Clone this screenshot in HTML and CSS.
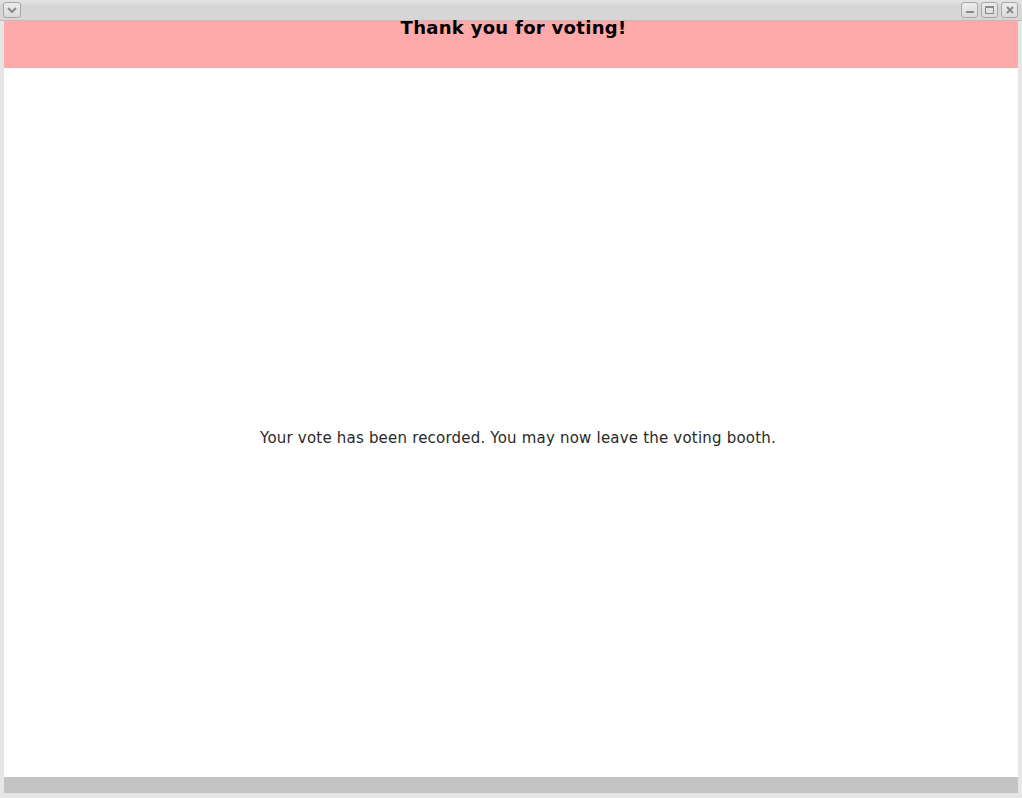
FILE: index.html
```html
<!DOCTYPE html>
<html>
<head>
<meta charset="utf-8">
<link rel="stylesheet" href="styles.css">
</head>
<body>
<div class="window">
  <div class="titlebar">
    <div class="tbtn menu"><svg width="10" height="6" viewBox="0 0 10 6"><path d="M1 1 L5 5 L9 1" fill="none" stroke="#8a8a8a" stroke-width="2"/></svg></div>
    <div class="spacer"></div>
    <div class="tbtn"><svg width="8" height="8" viewBox="0 0 8 8"><rect x="0" y="5" width="8" height="2" fill="#8a8a8a"/></svg></div>
    <div class="tbtn"><svg width="9" height="8" viewBox="0 0 9 8"><rect x="0.5" y="0.5" width="8" height="7" fill="none" stroke="#8a8a8a"/><rect x="0" y="0" width="9" height="2" fill="#8a8a8a"/></svg></div>
    <div class="tbtn"><svg width="8" height="8" viewBox="0 0 8 8"><path d="M1 1 L7 7 M7 1 L1 7" stroke="#8a8a8a" stroke-width="2"/></svg></div>
  </div>
  <div class="frame">
    <div class="content">
      <div class="header"><h1>Thank you for voting!</h1></div>
      <div class="main"><p>Your vote has been recorded. You may now leave the voting booth.</p></div>
      <div class="footer"></div>
    </div>
  </div>
</div>
</body>
</html>
```
FILE: styles.css
```css
html, body { margin: 0; padding: 0; }
body { width: 1022px; height: 798px; overflow: hidden; background: #e6e6e6; }
.window { display: flex; flex-direction: column; height: 798px; }
.titlebar {
  height: 21px; flex: none;
  background: linear-gradient(#e4e4e4, #d6d6d6 30%, #d6d6d6);
  border-bottom: 1px solid #bdbdbd;
  display: flex; align-items: flex-start; padding: 2px 4px 0 3px; box-sizing: border-box;
  gap: 3px; position: relative; z-index: 1;
}
.spacer { flex: 1; }
.tbtn {
  width: 15px; height: 14px; border: 1px solid #a8a8a8; border-radius: 3px;
  background: linear-gradient(#ececec, #dadada);
  display: flex; align-items: center; justify-content: center; flex: none;
}
.tbtn.menu { width: 16px; }
.frame { flex: 1; display: flex; padding: 0 4px 5px 4px; background: #e6e6e6; }
.content { flex: 1; display: flex; flex-direction: column; background: #fff; }
.header { height: 47px; flex: none; background: #ffaaaa; display: flex; justify-content: center; overflow: visible; }
.header h1 {
  margin: 0; margin-top: -5px; margin-left: 5px; font-family: "DejaVu Sans", sans-serif; font-weight: bold; font-size: 18px;
  color: #000; line-height: 24px; position: relative; z-index: 2; letter-spacing: 0.3px;
}
.main { flex: 1; display: flex; align-items: center; justify-content: center; }
.main p { margin: 0; margin-left: 14px; margin-top: 30px; font-family: "DejaVu Sans", sans-serif; font-size: 15px; color: #2a2a2a; letter-spacing: 0.2px; }
.footer { height: 16px; flex: none; background: #c4c4c4; }
```
